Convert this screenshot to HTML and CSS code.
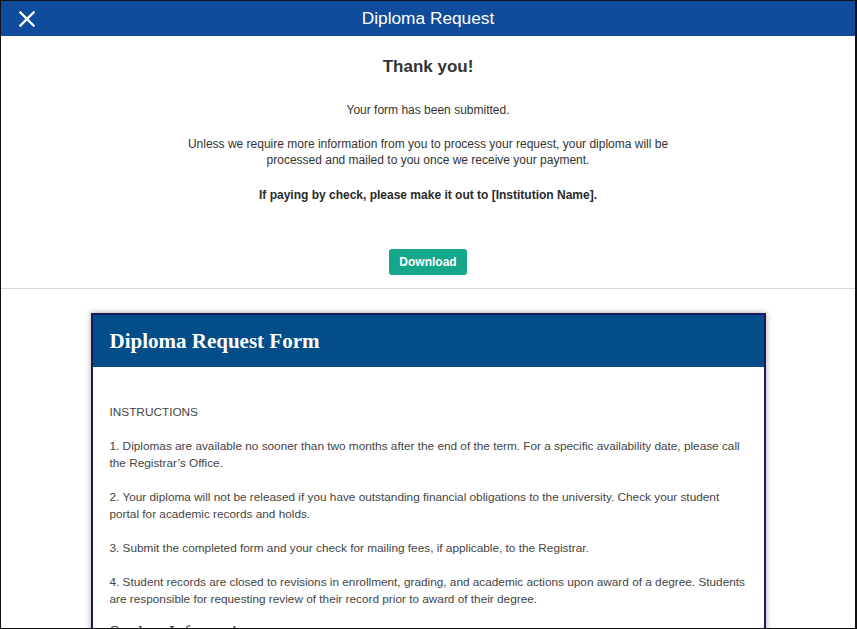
FILE: index.html
```html
<!DOCTYPE html>
<html>
<head>
<meta charset="utf-8">
<link rel="stylesheet" href="styles.css">
</head>
<body>
<div class="frame">
  <header class="topbar">
    <button class="close" aria-label="Close">
      <svg width="16" height="16" viewBox="0 0 16 16"><path d="M1.5 1.5 L14.5 14.5 M14.5 1.5 L1.5 14.5" stroke="#fff" stroke-width="2.4" stroke-linecap="square" fill="none"/></svg>
    </button>
    <div class="topbar-title">Diploma Request</div>
  </header>
  <section class="confirm">
    <h1 class="confirm-title">Thank you!</h1>
    <p class="msg msg-first">Your form has been submitted.</p>
    <p class="msg msg-wide">Unless we require more information from you to process your request, your diploma will be processed and mailed to you once we receive your payment.</p>
    <p class="msg msg-bold">If paying by check, please make it out to [Institution Name].</p>
    <button class="download">Download</button>
  </section>
  <section class="preview">
    <div class="card">
      <div class="card-head">Diploma Request Form</div>
      <div class="card-body">
        <p>INSTRUCTIONS</p>
        <p>1. Diplomas are available no sooner than two months after the end of the term. For a specific availability date, please call the Registrar’s Office.</p>
        <p>2. Your diploma will not be released if you have outstanding financial obligations to the university. Check your student portal for academic records and holds.</p>
        <p>3. Submit the completed form and your check for mailing fees, if applicable, to the Registrar.</p>
        <p>4. Student records are closed to revisions in enrollment, grading, and academic actions upon award of a degree. Students are responsible for requesting review of their record prior to award of their degree.</p>
        <h2 class="section-title">Student Information</h2>
      </div>
    </div>
  </section>
</div>
</body>
</html>
```
FILE: styles.css
```css
html, body {
  margin: 0;
  padding: 0;
  background: #fff;
}
.frame {
  width: 857px;
  height: 629px;
  box-sizing: border-box;
  border: 1px solid #111;
  border-right-width: 2px;
  overflow: hidden;
  font-family: "Liberation Sans", Arial, sans-serif;
  color: #333;
  background: #fff;
}
.topbar {
  height: 35px;
  background: #0f4c9b;
  display: flex;
  align-items: center;
  justify-content: center;
  position: relative;
}
.close {
  position: absolute;
  left: 17px;
  top: 9px;
  width: 18px;
  height: 18px;
  padding: 1px;
  border: 0;
  background: transparent;
  display: flex;
}
.topbar-title {
  color: #fff;
  font-size: 17.3px;
}
.confirm {
  display: flex;
  flex-direction: column;
  align-items: center;
  text-align: center;
  border-bottom: 1px solid #d8d8d8;
  padding: 20px 0 13px;
}
.confirm-title {
  margin: 0;
  font-size: 17px;
  line-height: 22px;
  font-weight: bold;
  color: #333;
}
.msg {
  margin: 0;
  font-size: 12px;
  line-height: 16px;
  color: #333;
}
.msg-first {
  margin-top: 24px;
}
.msg-wide {
  margin-top: 18px;
  max-width: 490px;
}
.msg-bold {
  margin-top: 19px;
  font-weight: bold;
  color: #2a2a2a;
}
.download {
  margin-top: 46px;
  height: 26px;
  padding: 0 10px;
  border: 0;
  border-radius: 3px;
  background: #16a68a;
  color: #fff;
  font-family: "Liberation Sans", Arial, sans-serif;
  font-weight: bold;
  font-size: 12px;
}
.preview {
  padding-top: 24px;
  display: flex;
  justify-content: center;
}
.card {
  width: 675px;
  box-sizing: border-box;
  border: 2px solid #1b1a5c;
  box-shadow: 0 0 6px rgba(0, 0, 0, 0.35);
}
.card-head {
  background: #034d88;
  height: 52px;
  display: flex;
  align-items: center;
  padding-left: 17px;
  color: #fff;
  font-family: "Liberation Serif", "Times New Roman", serif;
  font-weight: bold;
  font-size: 21px;
}
.card-body {
  padding: 37px 17px 0 17px;
  font-size: 11.8px;
  line-height: 17px;
  color: #444;
}
.card-body p {
  margin: 0 0 17px;
}
.section-title {
  margin: 0;
  font-family: "Liberation Serif", "Times New Roman", serif;
  font-weight: normal;
  font-size: 18px;
  color: #333;
}
```
